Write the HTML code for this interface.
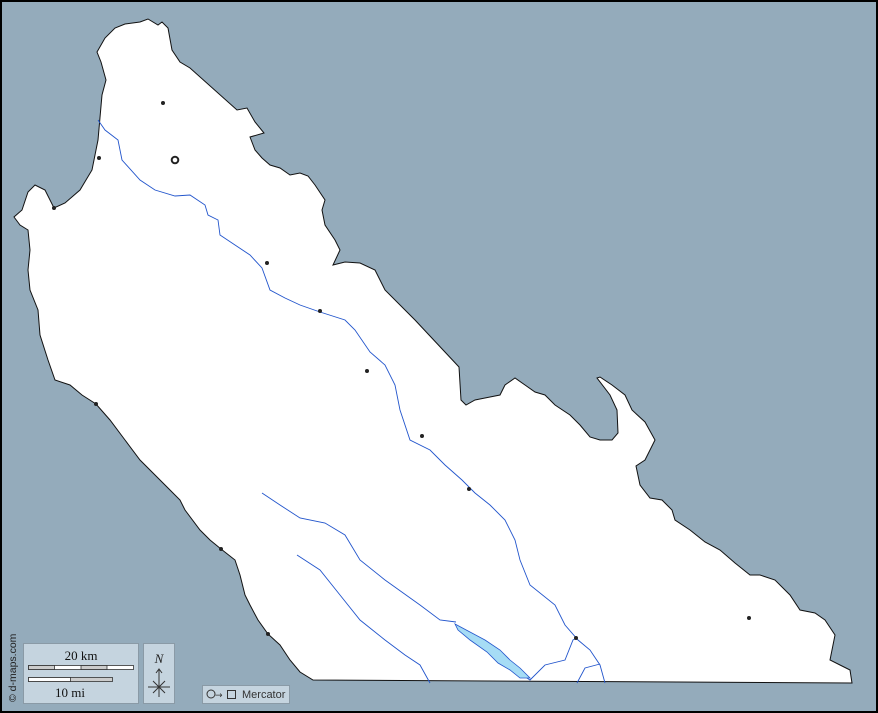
<!DOCTYPE html>
<html><head><meta charset="utf-8"><style>
html,body{margin:0;padding:0;}
body{width:878px;height:713px;overflow:hidden;background:#94abbb;}
svg{display:block}
</style></head><body>
<svg width="878" height="713" viewBox="0 0 878 713" xmlns="http://www.w3.org/2000/svg">
<rect x="1" y="1" width="876" height="711" fill="#94abbb" stroke="#000" stroke-width="2"/>
<path fill="#fff" stroke="#111" stroke-width="1" d="M97,52 L105,38 L115,28 L125,24 L140,22 L148,19 L158,25 L162,22 L168,28 L172,50 L180,62 L190,68 L237,110 L247,108 L255,122 L264,133 L250,137 L255,150 L262,158 L270,165 L280,168 L290,175 L300,173 L308,176 L315,185 L325,200 L322,210 L325,225 L335,240 L340,250 L333,265 L345,262 L360,263 L375,270 L385,290 L415,320 L459,367 L461,400 L466,405 L475,400 L490,397 L500,395 L505,385 L515,378 L525,385 L535,392 L545,395 L555,405 L570,415 L580,425 L590,437 L600,440 L612,440 L618,433 L617,410 L610,395 L597,378 L600,377 L612,385 L625,395 L632,410 L645,422 L655,440 L645,460 L636,466 L640,485 L650,498 L662,500 L672,510 L675,520 L690,530 L705,542 L720,550 L735,563 L750,575 L760,575 L775,580 L790,595 L800,610 L815,613 L825,620 L835,635 L830,660 L840,665 L850,670 L852,683 L313,680 L300,672 L290,660 L280,645 L268,634 L258,620 L250,605 L245,595 L240,575 L235,560 L221,549 L210,540 L200,530 L185,510 L180,500 L170,490 L155,475 L140,460 L125,440 L110,420 L96,404 L82,395 L70,385 L55,380 L48,360 L40,335 L38,310 L30,290 L28,270 L30,250 L28,230 L20,225 L14,217 L22,210 L28,192 L35,185 L45,190 L54,208 L65,203 L80,190 L92,170 L98,140 L102,95 L106,80 L101,62 Z"/>
<g fill="none" stroke="#2255cc" stroke-width="0.9">
<path d="M98,120 L105,130 L118,140 L122,160 L140,180 L155,190 L175,196 L190,195 L205,205 L208,215 L218,220 L220,235 L235,245 L250,255 L262,268 L270,290 L285,298 L300,305 L320,312 L345,320 L355,330 L370,352 L385,365 L395,385 L400,410 L410,440 L430,450 L445,465 L462,480 L475,493 L490,505 L505,520 L515,540 L520,560 L530,585 L555,605 L565,625 L578,640 L590,650 L600,665 L605,683"/>
<path d="M262,493 L280,505 L300,518 L325,523 L345,535 L360,560 L385,580 L420,605 L440,620 L456,622"/>
<path d="M524,676 L530,680 L545,665 L565,660 L573,640 L577,638"/>
<path d="M297,555 L320,570 L340,595 L360,620 L385,640 L405,655 L420,665 L430,683"/>
<path d="M577,683 L585,668 L600,664"/>
</g>
<path fill="#a6dcf5" stroke="#2255cc" stroke-width="0.8" d="M455,624 L470,632 L485,640 L500,650 L510,660 L520,668 L530,678 L520,678 L510,670 L498,663 L487,652 L470,640 L458,630 Z"/>
<g fill="#222">
<circle cx="163" cy="103" r="2"/><circle cx="99" cy="158" r="2"/><circle cx="54" cy="208" r="2"/>
<circle cx="267" cy="263" r="2"/><circle cx="320" cy="311" r="2"/><circle cx="367" cy="371" r="2"/>
<circle cx="422" cy="436" r="2"/><circle cx="469" cy="489" r="2"/><circle cx="96" cy="404" r="2"/>
<circle cx="221" cy="549" r="2"/><circle cx="268" cy="634" r="2"/><circle cx="576" cy="638" r="2"/>
<circle cx="749" cy="618" r="2"/>
</g>
<circle cx="175" cy="160" r="3.3" fill="#fff" stroke="#222" stroke-width="2"/>
<rect x="23.5" y="643.5" width="115" height="60" fill="#c5d4df" stroke="#8a9aa6"/>
<text x="81" y="660" font-family="Liberation Serif,serif" font-size="13" text-anchor="middle" fill="#111">20 km</text>
<rect x="28.5" y="665.5" width="105" height="4" fill="#fff" stroke="#333" stroke-width="0.8"/>
<rect x="28.5" y="665.5" width="26" height="4" fill="#ccc" stroke="#333" stroke-width="0.8"/>
<rect x="81" y="665.5" width="26" height="4" fill="#ccc" stroke="#333" stroke-width="0.8"/>
<rect x="28.5" y="677.5" width="84" height="4" fill="#ccc" stroke="#333" stroke-width="0.8"/>
<rect x="28.5" y="677.5" width="42" height="4" fill="#fff" stroke="#333" stroke-width="0.8"/>
<text x="70" y="697" font-family="Liberation Serif,serif" font-size="13" text-anchor="middle" fill="#111">10 mi</text>
<rect x="143.5" y="643.5" width="31" height="60" fill="#c5d4df" stroke="#8a9aa6"/>
<text x="159" y="663" font-family="Liberation Serif,serif" font-size="13" font-style="italic" text-anchor="middle" fill="#222">N</text>
<g stroke="#333" stroke-width="1" fill="none">
<path d="M159,670 L159,697 M156,673 L159,669 L162,673 M148,687 L170,687 M153,681 L165,693 M165,681 L153,693"/>
</g>
<rect x="202.5" y="685.5" width="87" height="18" fill="#c5d4df" stroke="#8a9aa6"/>
<circle cx="211" cy="694" r="4" fill="none" stroke="#333"/>
<text x="215" y="698" font-family="DejaVu Sans,sans-serif" font-size="9" fill="#333">→</text>
<rect x="227.5" y="690.5" width="8" height="8" fill="none" stroke="#333"/>
<text x="242" y="698" font-family="Liberation Sans,sans-serif" font-size="11" fill="#333">Mercator</text>
<text transform="translate(16,702) rotate(-90)" font-family="Liberation Sans,sans-serif" font-size="10.5" fill="#222">© d-maps.com</text>
</svg>
</body></html>
